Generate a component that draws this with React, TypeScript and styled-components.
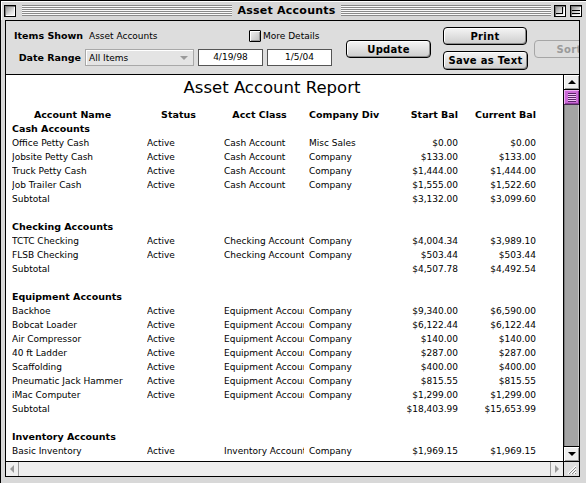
import React from 'react'
import styled, { createGlobalStyle } from 'styled-components'

const GlobalStyle = createGlobalStyle`
  html, body {
    margin: 0;
    padding: 0;
    background: #fff;
  }
  body {
    font-family: "DejaVu Sans", "Liberation Sans", sans-serif;
  }
`

type Row =
  | { kind: 'section'; name: string }
  | { kind: 'blank' }
  | { kind: 'item'; name: string; status?: string; cls?: string; div?: string; start: string; current: string }

const rows: Row[] = [
  { kind: 'section', name: 'Cash Accounts' },
  { kind: 'item', name: 'Office Petty Cash', status: 'Active', cls: 'Cash Account', div: 'Misc Sales', start: '$0.00', current: '$0.00' },
  { kind: 'item', name: 'Jobsite Petty Cash', status: 'Active', cls: 'Cash Account', div: 'Company', start: '$133.00', current: '$133.00' },
  { kind: 'item', name: 'Truck Petty Cash', status: 'Active', cls: 'Cash Account', div: 'Company', start: '$1,444.00', current: '$1,444.00' },
  { kind: 'item', name: 'Job Trailer Cash', status: 'Active', cls: 'Cash Account', div: 'Company', start: '$1,555.00', current: '$1,522.60' },
  { kind: 'item', name: 'Subtotal', start: '$3,132.00', current: '$3,099.60' },
  { kind: 'blank' },
  { kind: 'section', name: 'Checking Accounts' },
  { kind: 'item', name: 'TCTC Checking', status: 'Active', cls: 'Checking Account', div: 'Company', start: '$4,004.34', current: '$3,989.10' },
  { kind: 'item', name: 'FLSB Checking', status: 'Active', cls: 'Checking Account', div: 'Company', start: '$503.44', current: '$503.44' },
  { kind: 'item', name: 'Subtotal', start: '$4,507.78', current: '$4,492.54' },
  { kind: 'blank' },
  { kind: 'section', name: 'Equipment Accounts' },
  { kind: 'item', name: 'Backhoe', status: 'Active', cls: 'Equipment Account', div: 'Company', start: '$9,340.00', current: '$6,590.00' },
  { kind: 'item', name: 'Bobcat Loader', status: 'Active', cls: 'Equipment Account', div: 'Company', start: '$6,122.44', current: '$6,122.44' },
  { kind: 'item', name: 'Air Compressor', status: 'Active', cls: 'Equipment Account', div: 'Company', start: '$140.00', current: '$140.00' },
  { kind: 'item', name: '40 ft Ladder', status: 'Active', cls: 'Equipment Account', div: 'Company', start: '$287.00', current: '$287.00' },
  { kind: 'item', name: 'Scaffolding', status: 'Active', cls: 'Equipment Account', div: 'Company', start: '$400.00', current: '$400.00' },
  { kind: 'item', name: 'Pneumatic Jack Hammer', status: 'Active', cls: 'Equipment Account', div: 'Company', start: '$815.55', current: '$815.55' },
  { kind: 'item', name: 'iMac Computer', status: 'Active', cls: 'Equipment Account', div: 'Company', start: '$1,299.00', current: '$1,299.00' },
  { kind: 'item', name: 'Subtotal', start: '$18,403.99', current: '$15,653.99' },
  { kind: 'blank' },
  { kind: 'section', name: 'Inventory Accounts' },
  { kind: 'item', name: 'Basic Inventory', status: 'Active', cls: 'Inventory Account', div: 'Company', start: '$1,969.15', current: '$1,969.15' },
  { kind: 'item', name: 'Lumber Stock', status: 'Active', cls: 'Inventory Account', div: 'Company', start: '$2,410.00', current: '$2,410.00' },
]

const Window = styled.div`
  width: 586px;
  height: 483px;
  box-sizing: border-box;
  border-left: 1px solid #000;
  border-top: 1px solid #000;
  background: #d8d8d8;
  display: flex;
  flex-direction: column;
  overflow: hidden;
`

const TitleBar = styled.div`
  height: 19px;
  flex: none;
  display: flex;
  align-items: center;
  padding: 0 4px 0 3px;
  box-shadow: inset 1px 1px 0 #fff;
`

const WindowBox = styled.div`
  width: 12px;
  height: 12px;
  flex: none;
  box-sizing: border-box;
  border: 1px solid #000;
  background: linear-gradient(135deg, #888 0%, #ddd 60%, #fff 100%);
  box-shadow: inset 1px 1px 0 #777, inset -1px -1px 0 #fff;
  position: relative;
`

const ZoomMark = styled.div`
  position: absolute;
  left: 1px;
  top: 1px;
  width: 6px;
  height: 6px;
  border-right: 1px solid #000;
  border-bottom: 1px solid #000;
`

const CollapseMark = styled.div`
  position: absolute;
  left: 1px;
  right: 1px;
  top: 4px;
  height: 2px;
  border-top: 1px solid #000;
  border-bottom: 1px solid #000;
`

const Stripes = styled.div`
  flex: 1;
  height: 11px;
  background: repeating-linear-gradient(to bottom, #8a8a8a 0 1px, #fafafa 1px 2px);
`

const Title = styled.div`
  padding: 0 5px;
  font-size: 11px;
  font-weight: bold;
  letter-spacing: 0.25px;
  line-height: 19px;
  color: #000;
`

const Frame = styled.div`
  flex: 1;
  min-height: 0;
  display: flex;
  padding: 0 6px 6px 4px;
`

const Panel = styled.div`
  flex: 1;
  min-height: 0;
  border: 1px solid #000;
  display: flex;
  flex-direction: column;
  overflow: hidden;
`

const Toolbar = styled.div`
  height: 54px;
  flex: none;
  box-sizing: border-box;
  border-bottom: 1px solid #000;
  background: #dddddd;
  display: flex;
  align-items: flex-start;
  padding: 6px 0 0 8px;
  overflow: hidden;
`

const FieldGrid = styled.div`
  display: grid;
  grid-template-columns: 67px auto;
  grid-auto-rows: 17px;
  column-gap: 4px;
  row-gap: 5px;
  align-items: center;
`

const Label = styled.div`
  font-size: 9.5px;
  font-weight: bold;
  text-align: right;
  white-space: nowrap;
`

const ValueLine = styled.div`
  display: grid;
  grid-template-columns: 160px auto;
  align-items: center;
  padding-left: 4px;
  font-size: 9px;
`

const CheckLabel = styled.label`
  display: flex;
  align-items: center;
  gap: 2px;
  font-size: 9px;
`

const CheckBox = styled.span`
  width: 12px;
  height: 12px;
  box-sizing: border-box;
  border: 1px solid #000;
  border-radius: 1px;
  background: linear-gradient(135deg, #f2f2f2, #bdbdbd);
  box-shadow: inset 1px 1px 0 #fff, inset -1px -1px 0 #999;
`

const Controls = styled.div`
  display: flex;
  gap: 4px;
  height: 17px;
`

const Popup = styled.div`
  width: 109px;
  box-sizing: border-box;
  border: 1px solid #a8a8a8;
  background: #e4e4e4;
  box-shadow: inset 1px 1px 0 #fff;
  display: flex;
  align-items: center;
  justify-content: space-between;
  padding: 0 5px 0 3px;
  font-size: 9px;
`

const PopupArrow = styled.span`
  width: 0;
  height: 0;
  border-left: 4px solid transparent;
  border-right: 4px solid transparent;
  border-top: 4px solid #9a9a9a;
`

const DateField = styled.div`
  width: 65px;
  box-sizing: border-box;
  border: 1px solid #555;
  background: #fff;
  font-size: 9px;
  line-height: 15px;
  text-align: center;
`

const Button = styled.div<{ $w: number; $h?: number; $off?: boolean }>`
  width: ${({ $w }) => $w}px;
  height: ${({ $h }) => $h ?? 18}px;
  flex: none;
  box-sizing: border-box;
  border: 1px solid ${({ $off }) => ($off ? '#a6a6a6' : '#000')};
  border-radius: 4px;
  background: ${({ $off }) => ($off ? '#dddddd' : 'linear-gradient(#f5f5f5, #cdcdcd)')};
  box-shadow: ${({ $off }) => ($off ? 'none' : 'inset 1px 1px 0 #fff, inset -1px -1px 0 #8c8c8c')};
  color: ${({ $off }) => ($off ? '#9a9a9a' : '#000')};
  font-size: 10px;
  font-weight: bold;
  letter-spacing: 0.3px;
  display: flex;
  align-items: center;
  justify-content: center;
`

const ButtonStack = styled.div`
  display: flex;
  flex-direction: column;
  gap: 6px;
  margin-left: 12px;
`

const Body = styled.div`
  flex: 1;
  display: flex;
  min-height: 0;
`

const Report = styled.div`
  flex: 1;
  background: #fff;
  overflow: hidden;
  padding-left: 6px;
`

const ReportTitle = styled.div`
  width: 524px;
  text-align: center;
  font-size: 16.5px;
  line-height: 20px;
  padding: 3px 4px 0 0;
  margin-bottom: 10px;
  box-sizing: border-box;
`

const Table = styled.div`
  width: 524px;
  display: grid;
  grid-template-columns: 130px 72px 80px 75px 69px 73px;
  grid-auto-rows: 14px;
  column-gap: 5px;
  font-size: 9px;
  line-height: 14px;
`

const Cell = styled.div<{ $right?: boolean }>`
  white-space: nowrap;
  overflow: hidden;
  text-align: ${({ $right }) => ($right ? 'right' : 'left')};
`

const HeadCell = styled.div<{ $right?: boolean }>`
  white-space: nowrap;
  font-size: 9.5px;
  font-weight: bold;
  text-align: ${({ $right }) => ($right ? 'right' : 'center')};
  padding-right: ${({ $right }) => ($right ? 0 : 9)}px;
`

const SectionCell = styled.div`
  grid-column: 1 / -1;
  font-size: 9.5px;
  font-weight: bold;
`

const VScroll = styled.div`
  width: 15px;
  flex: none;
  border-left: 1px solid #000;
  display: flex;
  flex-direction: column;
  background: #a4a4a4;
  box-shadow: inset 1px 0 0 #7a7a7a, inset -1px 0 0 #c8c8c8;
`

const ArrowBox = styled.div<{ $top?: boolean }>`
  height: 14px;
  flex: none;
  background: #eeeeee;
  box-shadow: inset 1px 1px 0 #fff, inset -1px -1px 0 #999;
  border-${({ $top }) => ($top ? 'bottom' : 'top')}: 1px solid #000;
  display: flex;
  align-items: center;
  justify-content: center;
`

const Thumb = styled.div`
  height: 15px;
  flex: none;
  box-sizing: border-box;
  border-bottom: 1px solid #4a2a55;
  background: #cc6ad8;
  box-shadow: inset 1px 1px 0 #eeb0f4, inset -1px -1px 0 #8c3a9a;
  display: flex;
  align-items: center;
  justify-content: center;
`

const Grip = styled.div`
  width: 8px;
  height: 9px;
  background: repeating-linear-gradient(to bottom, #5a2468 0 1px, #f2c4f8 1px 2px);
`

const Track = styled.div`
  flex: 1;
`

const HBar = styled.div`
  height: 14px;
  flex: none;
  border-top: 1px solid #000;
  display: flex;
  background: #eeeeee;
`

const HArrow = styled.div<{ $side: 'left' | 'right' }>`
  width: 12px;
  flex: none;
  border-${({ $side }) => ($side === 'left' ? 'right' : 'left')}: 1px solid #9a9a9a;
  display: flex;
  align-items: center;
  justify-content: center;
`

const HTrack = styled.div`
  flex: 1;
`

const GrowBox = styled.div`
  width: 15px;
  flex: none;
  border-left: 1px solid #000;
  background: #dddddd;
  display: flex;
  align-items: center;
  justify-content: center;
`

const Tri = ({ dir, color }: { dir: 'up' | 'down' | 'left' | 'right'; color: string }) => {
  const pts = {
    up: '0,5 4,1 8,5',
    down: '0,1 8,1 4,5',
    left: '4,0 4,8 0,4',
    right: '0,0 0,8 4,4',
  }[dir]
  const horiz = dir === 'left' || dir === 'right'
  return (
    <svg width={horiz ? 5 : 8} height={horiz ? 8 : 6} viewBox={horiz ? '0 0 5 8' : '0 0 8 6'}>
      <polygon points={pts} fill={color} />
    </svg>
  )
}

const App: React.FC = () => {
  return (
    <>
      <GlobalStyle />
      <Window>
        <TitleBar>
          <WindowBox />
          <Stripes style={{ marginLeft: 6 }} />
          <Title>Asset Accounts</Title>
          <Stripes />
          <WindowBox style={{ marginLeft: 3 }}>
            <ZoomMark />
          </WindowBox>
          <WindowBox style={{ marginLeft: 4 }}>
            <CollapseMark />
          </WindowBox>
        </TitleBar>
        <Frame>
          <Panel>
            <Toolbar>
              <FieldGrid>
                <Label>Items Shown</Label>
                <ValueLine>
                  <span>Asset Accounts</span>
                  <CheckLabel>
                    <CheckBox />
                    More Details
                  </CheckLabel>
                </ValueLine>
                <Label>Date Range</Label>
                <Controls>
                  <Popup>
                    <span>All Items</span>
                    <PopupArrow />
                  </Popup>
                  <DateField>4/19/98</DateField>
                  <DateField>1/5/04</DateField>
                </Controls>
              </FieldGrid>
              <Button $w={85} style={{ marginLeft: 14, marginTop: 13 }}>
                Update
              </Button>
              <ButtonStack>
                <Button $w={84}>Print</Button>
                <Button $w={85} $h={19}>
                  Save as Text
                </Button>
              </ButtonStack>
              <Button $w={70} $off style={{ marginLeft: 6, marginTop: 13 }}>
                Sort
              </Button>
            </Toolbar>
            <Body>
              <Report>
                <ReportTitle>Asset Account Report</ReportTitle>
                <Table>
                  <HeadCell>Account Name</HeadCell>
                  <HeadCell>Status</HeadCell>
                  <HeadCell>Acct Class</HeadCell>
                  <HeadCell>Company Div</HeadCell>
                  <HeadCell $right>Start Bal</HeadCell>
                  <HeadCell $right>Current Bal</HeadCell>
                  {rows.map((r, i) => {
                    if (r.kind === 'section') return <SectionCell key={i}>{r.name}</SectionCell>
                    if (r.kind === 'blank') return <SectionCell key={i} />
                    return (
                      <React.Fragment key={i}>
                        <Cell>{r.name}</Cell>
                        <Cell>{r.status}</Cell>
                        <Cell>{r.cls}</Cell>
                        <Cell>{r.div}</Cell>
                        <Cell $right>{r.start}</Cell>
                        <Cell $right>{r.current}</Cell>
                      </React.Fragment>
                    )
                  })}
                </Table>
              </Report>
              <VScroll>
                <ArrowBox $top>
                  <Tri dir="up" color="#000" />
                </ArrowBox>
                <Thumb>
                  <Grip />
                </Thumb>
                <Track />
                <ArrowBox>
                  <Tri dir="down" color="#000" />
                </ArrowBox>
              </VScroll>
            </Body>
            <HBar>
              <HArrow $side="left">
                <Tri dir="left" color="#999" />
              </HArrow>
              <HTrack />
              <HArrow $side="right">
                <Tri dir="right" color="#999" />
              </HArrow>
              <GrowBox>
                <svg width="11" height="11" viewBox="0 0 11 11">
                  <path d="M10 2 L2 10 M10 5 L5 10 M10 8 L8 10" stroke="#fff" strokeWidth="1.2" />
                  <path d="M10 3 L3 10 M10 6 L6 10 M10 9 L9 10" stroke="#888" strokeWidth="1" />
                </svg>
              </GrowBox>
            </HBar>
          </Panel>
        </Frame>
      </Window>
    </>
  )
}

export default App
